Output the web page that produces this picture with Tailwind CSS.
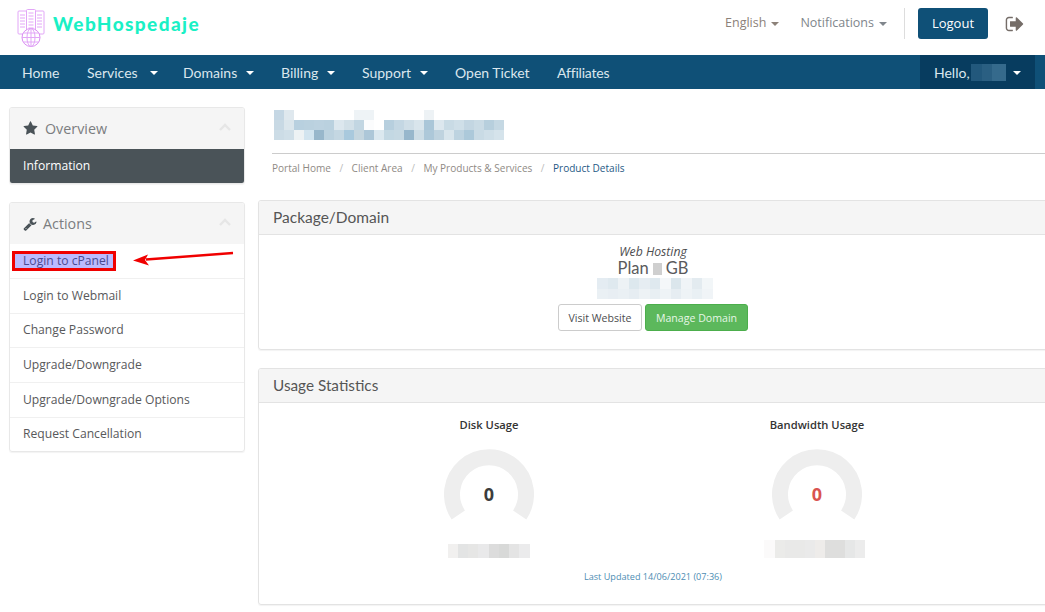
<!DOCTYPE html>
<html lang="en">
<head>
<meta charset="utf-8">
<title>Product Details</title>
<script src="https://cdn.jsdelivr.net/npm/@tailwindcss/browser@4"></script>
</head>
<body class="relative w-[1045px] h-[612px] overflow-hidden bg-white font-['Open_Sans',sans-serif] text-[12px] text-[#58595b]">

<header class="h-[55px] flex items-center pl-[17px] pr-[20px] pb-[8px]">
  <svg class="w-[28px] h-[38px] mt-[8px]" viewBox="0 0 28 38" fill="none" stroke="#e2a6f7" stroke-width="1">
    <rect x="1" y="2" width="9" height="23" rx="1"/><rect x="18" y="2" width="9" height="23" rx="1"/><rect x="9.5" y="0.5" width="9" height="26" rx="1" fill="#fff"/>
    <path d="M3 6h5M3 9h5M3 12h5M3 15h5M3 18h5M20 6h5M20 9h5M20 12h5M20 15h5M20 18h5M11.5 4h5M11.5 7h5M11.5 10h5M11.5 13h5M11.5 16h5M11.5 19h5"/>
    <circle cx="14" cy="28.500" r="9" fill="#fff" stroke="#d98cf2"/>
    <ellipse cx="14" cy="28.500" rx="4" ry="9"/><path d="M14 19.500v18M5 28.500h18M6.500 24h15M6.500 33h15"/>
  </svg>
  <div class="ml-[8px] mt-[2px] font-['Lato',sans-serif] font-black text-[19px] tracking-[1.4px] text-[#1af0c5]">WebHospedaje</div>
  <div class="ml-auto flex items-center text-[12.500px] text-[#8c8179]">
    <span>English</span><span class="ml-[5px] w-0 h-0 border-x-[4px] border-x-transparent border-t-[4px] border-t-[#8c8179]"></span>
    <span class="ml-[21px] text-[#80868c]">Notifications</span><span class="ml-[5px] w-0 h-0 border-x-[4px] border-x-transparent border-t-[4px] border-t-[#80868c]"></span>
    <span class="ml-[17px] w-px h-[31px] bg-[#ddd]"></span>
    <span class="ml-[13px] w-[70px] h-[31px] flex items-center justify-center rounded-[3px] bg-[#0f5077] text-[13px] text-white">Logout</span>
    <svg class="ml-[17px] w-[20px] h-[20px]" viewBox="0 0 1792 1792" fill="#756d68"><path d="M704 1440q0 4 1 20t.5 26.5-3 23.5-10 19.5-20.5 6.5h-320q-119 0-203.500-84.500t-84.500-203.500v-704q0-119 84.500-203.500t203.500-84.500h320q13 0 22.500 9.500t9.500 22.500q0 4 1 20t.5 26.500-3 23.500-10 19.500-20.500 6.500h-320q-66 0-113 47t-47 113v704q0 66 47 113t113 47h312l11.500 1 11.500 3 8 5.500 7 9 2 13.500zm928-544q0 26-19 45l-544 544q-19 19-45 19t-45-19-19-45v-288h-448q-26 0-45-19t-19-45v-384q0-26 19-45t45-19h448v-288q0-26 19-45t45-19 45 19l544 544q19 19 19 45z"/></svg>
  </div>
</header>

<nav class="h-[34px] bg-[#0f5077] flex items-center pl-[22px] font-['Lato',sans-serif] text-[14px] text-[#dbe7ee]">
  <span class="w-[65px]">Home</span>
  <span class="w-[96px] flex items-center">Services<i class="ml-[12px] mt-[2px] w-0 h-0 border-x-[4px] border-x-transparent border-t-[4px] border-t-white"></i></span>
  <span class="w-[98px] flex items-center">Domains<i class="ml-[9px] mt-[2px] w-0 h-0 border-x-[4px] border-x-transparent border-t-[4px] border-t-white"></i></span>
  <span class="w-[81px] flex items-center">Billing<i class="ml-[9px] mt-[2px] w-0 h-0 border-x-[4px] border-x-transparent border-t-[4px] border-t-white"></i></span>
  <span class="w-[93px] flex items-center">Support<i class="ml-[9px] mt-[2px] w-0 h-0 border-x-[4px] border-x-transparent border-t-[4px] border-t-white"></i></span>
  <span class="w-[102px]">Open Ticket</span>
  <span class="tracking-[-0.2px]">Affiliates</span>
  <div class="ml-auto mr-[10px] w-[115px] h-full bg-[#073c5f] flex items-center pl-[14px]">
    <span>Hello,</span>
    <span class="ml-px w-[35px] h-[17px] flex"><i class="w-[11px] bg-[#22587c]"></i><i class="w-[10px] bg-[#2a5f82]"></i><i class="w-[14px] bg-[#356a8c]"></i></span>
    <i class="ml-[7px] mt-[2px] w-0 h-0 border-x-[4px] border-x-transparent border-t-[4px] border-t-white"></i>
  </div>
</nav>

<div class="flex items-start pl-[9px] pt-[18px]">
  <aside class="w-[236px] shrink-0 flex flex-col gap-[18px] text-[12.150px] text-[#58595b]">
    <section class="rounded-[3px] border border-[#e8e8e8] shadow-[0_1px_1px_rgba(0,0,0,0.05)] overflow-hidden">
      <div class="h-[41px] bg-[#f5f5f5] flex items-center pl-[13px] pr-[13px] text-[14.300px] text-[#7b7d80]">
        <svg class="w-[15px] h-[15px] mr-[7px]" viewBox="0 0 1792 1792" fill="#4a5358"><path d="M1728 647q0 22-26 48l-363 354 86 500q1 7 1 20 0 21-10.500 35.500t-30.500 14.500q-19 0-40-12l-449-236-449 236q-22 12-40 12-21 0-31.500-14.500t-10.500-35.500q0-6 2-20l86-500-364-354q-25-27-25-48 0-37 56-46l502-73 225-455q19-41 49-41t49 41l225 455 502 73q56 9 56 46z"/></svg>
        <span>Overview</span>
        <svg class="ml-auto mt-[-4px] w-[12px] h-[8px]" viewBox="0 0 12 8" fill="none" stroke="#e6e6e6" stroke-width="2.400"><path d="M1 7l5-5 5 5"/></svg>
      </div>
      <div class="h-[34px] bg-[#4a5358] text-white flex items-center pl-[13px]">Information</div>
    </section>
    <section class="rounded-[3px] border border-[#e8e8e8] shadow-[0_1px_1px_rgba(0,0,0,0.05)] overflow-hidden">
      <div class="h-[41px] bg-[#f5f5f5] flex items-center pl-[13px] pr-[13px] text-[14.300px] text-[#7b7d80]">
        <svg class="w-[14px] h-[14px] mr-[6px]" viewBox="0 0 1792 1792" fill="#4a5358"><path d="M448 1472q0-26-19-45t-45-19-45 19-19 45 19 45 45 19 45-19 19-45zm644-420l-682 682q-37 37-90 37-52 0-91-37l-106-108q-38-36-38-90 0-53 38-91l681-681q39 98 114.500 173.500t173.500 114.500zm634-435q0 39-23 106-47 134-164.500 217.500t-258.500 83.500q-185 0-316.500-131.500t-131.500-316.500 131.500-316.500 316.500-131.500q58 0 121.500 16.500t107.500 46.500q16 11 16 28t-16 28l-293 169v224l193 107q5-3 79-48.500t135.500-81 70.500-35.500q15 0 23.500 10t8.500 25z"/></svg>
        <span>Actions</span>
        <svg class="ml-auto mt-[-4px] w-[12px] h-[8px]" viewBox="0 0 12 8" fill="none" stroke="#e6e6e6" stroke-width="2.400"><path d="M1 7l5-5 5 5"/></svg>
      </div>
      <div class="h-[34px]"></div>
      <div class="h-[34.700px] flex items-center pl-[13px] border-t border-[#f0f0f0]">Login to Webmail</div>
      <div class="h-[34.700px] flex items-center pl-[13px] border-t border-[#f0f0f0]">Change Password</div>
      <div class="h-[34.700px] flex items-center pl-[13px] border-t border-[#f0f0f0]">Upgrade/Downgrade</div>
      <div class="h-[34.700px] flex items-center pl-[13px] border-t border-[#f0f0f0]">Upgrade/Downgrade Options</div>
      <div class="h-[34.700px] flex items-center pl-[13px] border-t border-[#f0f0f0]">Request Cancellation</div>
    </section>
  </aside>

  <main class="ml-[13px] w-[790px] shrink-0">
    <div class="ml-[14px] pl-[2px] pt-[3px] h-[47px] border-b border-[#ccc] box-border">
      <div class="grid grid-cols-[repeat(23,10px)] auto-rows-[10px]">
        <i class="bg-[#c5d7e4]"></i><i class="bg-[#dfe8ee]"></i><i></i><i></i><i></i><i></i><i></i><i></i><i class="bg-[#eef3f6]"></i><i class="bg-[#eef3f6]"></i><i></i><i></i><i></i><i></i><i></i><i class="bg-[#edf2f5]"></i><i></i><i></i><i></i><i></i><i></i><i></i><i></i>
        <i class="bg-[#c8d9e4]"></i><i class="bg-[#dbe6ec]"></i><i class="bg-[#b8d0df]"></i><i class="bg-[#bad1df]"></i><i class="bg-[#bcd2e0]"></i><i class="bg-[#bad1df]"></i><i class="bg-[#dce7ee]"></i><i class="bg-[#d2e0e8]"></i><i class="bg-[#c2d6e2]"></i><i class="bg-[#fbfcfd]"></i><i></i><i class="bg-[#b7cfde]"></i><i class="bg-[#c4d7e3]"></i><i class="bg-[#cfdee7]"></i><i class="bg-[#d9e5ec]"></i><i class="bg-[#aac6d8]"></i><i class="bg-[#dce7ee]"></i><i class="bg-[#c9dbe5]"></i><i class="bg-[#cfdfe8]"></i><i class="bg-[#c3d6e2]"></i><i class="bg-[#cadbe5]"></i><i class="bg-[#b7cfdd]"></i><i class="bg-[#c5d8e3]"></i>
        <i class="bg-[#ccdce6]"></i><i class="bg-[#d0dfe8]"></i><i class="bg-[#edf2f4]"></i><i class="bg-[#d2e4ef]"></i><i class="bg-[#98b7cb]"></i><i class="bg-[#bcd2df]"></i><i class="bg-[#c4d7e2]"></i><i class="bg-[#a9c9dd]"></i><i class="bg-[#c5d6df]"></i><i class="bg-[#adc7d8]"></i><i class="bg-[#dbe8ef]"></i><i class="bg-[#c3d8e3]"></i><i class="bg-[#c6d9e3]"></i><i class="bg-[#97b7cc]"></i><i class="bg-[#cddde6]"></i><i class="bg-[#adc8d9]"></i><i class="bg-[#bfd3df]"></i><i class="bg-[#d8e5ec]"></i><i class="bg-[#bdd3e0]"></i><i class="bg-[#acc9da]"></i><i class="bg-[#c9dbe5]"></i><i class="bg-[#cfdfe8]"></i><i class="bg-[#d5e3eb]"></i>
      </div>
    </div>
    <div class="ml-[14px] mt-[7px] h-[39px] flex text-[10.050px] leading-[15px] text-[#8f8a85]">
      <span>Portal Home</span><span class="mx-[8.500px] text-[#bbb]">/</span><span>Client Area</span><span class="mx-[8.500px] text-[#bbb]">/</span><span>My Products &amp; Services</span><span class="mx-[8.500px] text-[#bbb]">/</span><span class="text-[#1f5a85]">Product Details</span>
    </div>

    <section class="h-[150px] rounded-[3px] border border-[#e3e3e3] shadow-[0_1px_1px_rgba(0,0,0,0.05)] overflow-hidden">
      <div class="h-[34px] bg-[#f5f5f5] border-b border-[#e3e3e3] flex items-center pl-[14px] font-['Lato',sans-serif] text-[15.500px] text-[#555]">Package/Domain</div>
      <div class="flex flex-col items-center pt-[9px]">
        <em class="text-[12.200px] leading-[16px] text-[#4d4d4f]">Web Hosting</em>
        <div class="flex items-center font-['Lato',sans-serif] text-[16.500px] leading-[17px] text-[#5a5a5c]">Plan<i class="mx-[4px] w-[9px] h-[12px] bg-[#cfcfcf]"></i>GB</div>
        <div class="mt-[1px] ml-[4px] grid grid-cols-[repeat(11,10.500px)] auto-rows-[10.500px]">
          <i class="bg-[#e4ecf2]"></i><i class="bg-[#dfe9ef]"></i><i class="bg-[#edf2f5]"></i><i class="bg-[#dde8ee]"></i><i class="bg-[#e6edf2]"></i><i class="bg-[#dfe9ef]"></i><i class="bg-[#f4f7f9]"></i><i class="bg-[#dbe6ec]"></i><i class="bg-[#f0f4f7]"></i><i class="bg-[#e3ebf0]"></i><i class="bg-[#f2f6f8]"></i>
          <i class="bg-[#eaf0f4]"></i><i class="bg-[#e8eef3]"></i><i class="bg-[#eaf0f4]"></i><i class="bg-[#e6edf2]"></i><i class="bg-[#edf2f5]"></i><i class="bg-[#e8eff3]"></i><i class="bg-[#eef3f6]"></i><i class="bg-[#e6edf2]"></i><i class="bg-[#eef3f6]"></i><i class="bg-[#e9f0f4]"></i><i class="bg-[#f0f4f7]"></i>
        </div>
        <div class="mt-[5px] flex gap-[3px] text-[10.600px]">
          <span class="h-[27px] w-[84px] pt-[2px] justify-center flex items-center rounded-[3px] border border-[#ccc] text-[#4d4d4f]">Visit Website</span>
          <span class="h-[27px] w-[103px] pt-[2px] justify-center flex items-center rounded-[3px] border border-[#4cae4c] bg-[#5cb85c] text-[#e6f6e6]">Manage Domain</span>
        </div>
      </div>
    </section>

    <section class="mt-[18px] h-[237px] rounded-[3px] border border-[#e3e3e3] shadow-[0_1px_1px_rgba(0,0,0,0.05)] overflow-hidden">
      <div class="h-[34px] bg-[#f5f5f5] border-b border-[#e3e3e3] flex items-center pl-[14px] font-['Lato',sans-serif] text-[15.300px] text-[#555]">Usage Statistics</div>
      <div class="flex justify-center pt-[14px]">
        <div class="w-[328px] flex flex-col items-center">
          <div class="text-[11.200px] leading-[16px] font-semibold text-[#333]">Disk Usage</div>
          <div class="relative mt-[16px] w-[90px] h-[90px]">
            <svg class="w-[90px] h-[90px]" viewBox="0 0 90 90" fill="none" stroke="#eeeeee" stroke-width="16"><path d="M14.300 66A37 37 0 1 1 75.700 66"/></svg>
            <div class="absolute inset-0 flex items-center justify-center text-[18px] font-bold text-[#3c3c3c]">0</div>
          </div>
          <div class="mt-[5px] h-[14px] flex">
            <i class="w-[10px] bg-[#f1f0ef]"></i><i class="w-[10px] bg-[#e3e4e4]"></i><i class="w-[10px] bg-[#e6e6e5]"></i><i class="w-[11px] bg-[#e9e9ea]"></i><i class="w-[10px] bg-[#dcdcdc]"></i><i class="w-[10px] bg-[#d8d9d8]"></i><i class="w-[10px] bg-[#e4e4e4]"></i><i class="w-[11px] bg-[#ebebec]"></i>
          </div>
        </div>
        <div class="w-[328px] flex flex-col items-center">
          <div class="text-[11.200px] leading-[16px] font-semibold text-[#333]">Bandwidth Usage</div>
          <div class="relative mt-[16px] w-[90px] h-[90px]">
            <svg class="w-[90px] h-[90px]" viewBox="0 0 90 90" fill="none" stroke="#eeeeee" stroke-width="16"><path d="M14.300 66A37 37 0 1 1 75.700 66"/></svg>
            <div class="absolute inset-0 flex items-center justify-center text-[18px] font-bold text-[#d9534f]">0</div>
          </div>
          <div class="mt-[1px] mr-[5px] h-[18px] flex">
            <i class="w-[11px] bg-[#fbfafa]"></i><i class="w-[10px] bg-[#ebebe9]"></i><i class="w-[20px] bg-[#e9e9e8]"></i><i class="w-[10px] bg-[#eaeaea]"></i><i class="w-[10px] bg-[#eeecea]"></i><i class="w-[20px] bg-[#dededd]"></i><i class="w-[10px] bg-[#e6e7e7]"></i><i class="w-[10px] bg-[#ececec]"></i>
          </div>
        </div>
      </div>
      <div class="mt-[12px] text-center text-[9.100px] text-[#4d8db3]">Last Updated 14/06/2021 (07:36)</div>
    </section>
  </main>
</div>

<!-- annotation drawn over the screenshot -->
<div class="absolute left-[12px] top-[251px] w-[104px] h-[20px] border-[3px] border-[#f00000] bg-[#bbbbff] flex items-center pl-[8px] text-[12.150px] text-[#4a4a90]">Login to cPanel</div>
<svg class="absolute left-[130px] top-[245px] w-[110px] h-[24px]" viewBox="0 0 110 24" fill="none"><path d="M16 14.500L103 8" stroke="#f00000" stroke-width="2.400"/><path d="M3 15.500L18 9.500L15 15L19 20.500Z" fill="#f00000"/></svg>

</body>
</html>
